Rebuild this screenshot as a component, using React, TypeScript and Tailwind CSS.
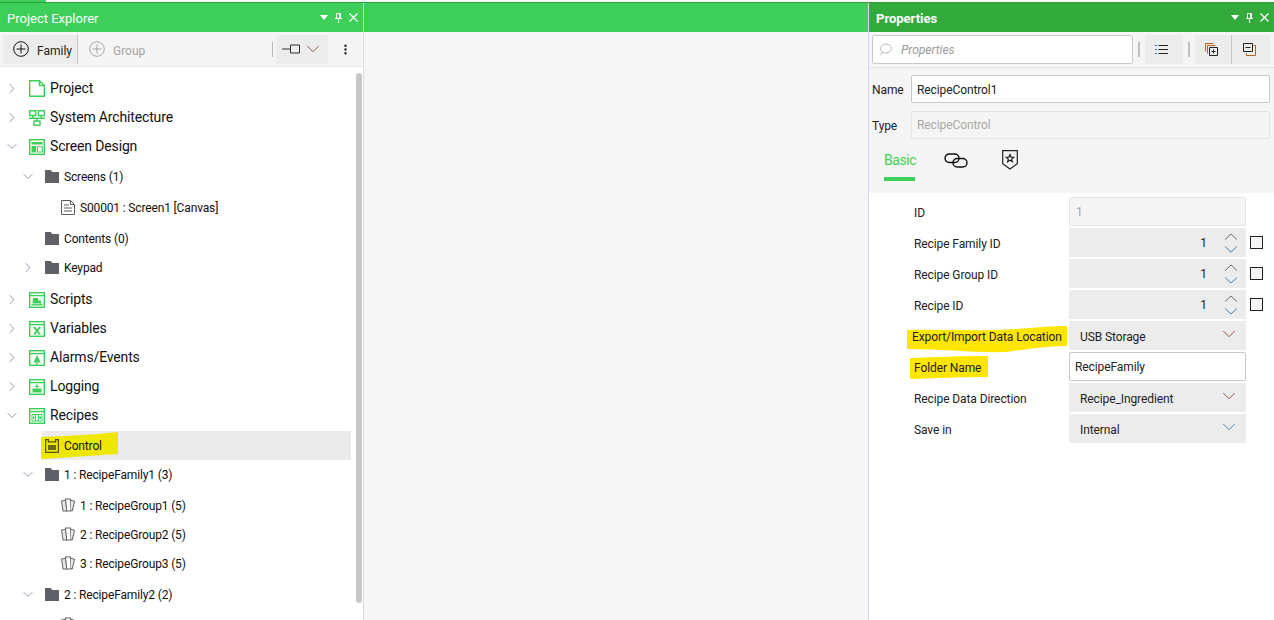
import { ChevronDown, ChevronRight, EllipsisVertical } from "lucide-react"
import type { ReactNode } from "react"

const font = "font-['Roboto','Noto_Sans',sans-serif]"

function Box({ children }: { children: ReactNode }) {
  return (
    <svg width="16" height="16" viewBox="0 0 16 16" fill="none" stroke="#3ecf5a" strokeWidth="1.4">
      <rect x="0.7" y="0.7" width="14.600" height="14.600" />
      {children}
    </svg>
  )
}

const icons: Record<string, ReactNode> = {
  project: (
    <svg width="16" height="17" viewBox="0 0 16 17" fill="none" stroke="#3ecf5a" strokeWidth="1.4">
      <path d="M.7.7h9.800l4.800 4.800v10.800H.7zM10.500.7v4.800h4.800" />
    </svg>
  ),
  system: (
    <svg width="16" height="16" viewBox="0 0 16 16" fill="none" stroke="#3ecf5a" strokeWidth="1.4">
      <path d="M.7.7h6v4.800h-6zM9.300.7h6v4.800h-6zM5 11h6v4.300H5zM3.700 5.500v2.700M12.300 5.500v2.700M8 8.200V11M0 8.200h16" />
    </svg>
  ),
  screen: (
    <Box>
      <path d="M2.500 3h11v2.500h-11z" fill="#3ecf5a" stroke="none" />
      <path d="M2.500 7h4.500v6.500H2.500z" fill="#3ecf5a" stroke="none" />
      <path d="M8.500 7.700h4.800v5.300H8.500z" strokeWidth="1.100" />
    </Box>
  ),
  scripts: (
    <Box>
      <path d="M.7 3.600h14.600" />
      <path d="M4 6h5v2.500h3v3H3.500z" fill="#3ecf5a" stroke="none" />
      <path d="M2.500 12.800h11" />
    </Box>
  ),
  variables: (
    <Box>
      <path d="M.7 3.600h14.600" />
      <path d="M5 6l6 7.500M11 6l-6 7.500" strokeWidth="2" />
    </Box>
  ),
  alarms: (
    <Box>
      <path d="M.7 3.600h14.600" />
      <path d="M8 5l3.500 7.500h-7zM7 13h2v1.500H7z" fill="#3ecf5a" stroke="none" />
    </Box>
  ),
  logging: (
    <Box>
      <path d="M.7 3.600h14.600" />
      <path d="M8 5v4M6 7.500h4" strokeWidth="1.100" />
      <path d="M3.500 9.500h9v4h-9z" fill="#3ecf5a" stroke="none" />
    </Box>
  ),
  recipes: (
    <Box>
      <path d="M.7 3.600h14.600" />
      <path d="M3 6.500h10v6.500H3zM6.500 6.500V13M9.500 6.500V13" strokeWidth="1" />
      <path d="M4 8.500h1.500v2.500H4zM10.500 8.500H12v2.500h-1.500z" fill="#3ecf5a" stroke="none" />
    </Box>
  ),
  folder: (
    <svg width="14" height="13" viewBox="0 0 14 13" fill="#5f5f66">
      <path d="M0 0h5.500l2 2H14v11H0z" />
    </svg>
  ),
  doc: (
    <svg width="14" height="15" viewBox="0 0 14 15" fill="none" stroke="#5c5c5c">
      <path d="M.5.500h9l4 4v10H.5zM9.500.500v4h4M3 5h5M3 8h8M3 11h8" />
    </svg>
  ),
  control: (
    <svg width="14" height="14" viewBox="0 0 14 14" fill="none" stroke="#55500f" strokeWidth="1.200">
      <path d="M.6.600h2.800v2.200h7.200V.600h2.800v12.800H.6z" />
      <path d="M3 6h8v5H3z" fill="#6b6a10" stroke="none" />
    </svg>
  ),
  group: (
    <svg width="15" height="15" viewBox="0 0 15 15" fill="none" stroke="#666" strokeWidth="1.100">
      <path d="M.6 2.800l4.600-.8 1 11.400H2.200z" fill="#e8e8e8" />
      <path d="M4.800.6h5.400l.6 12.800H6.200z" fill="#fff" />
      <path d="M10.600 2l3.900 1-2.400 10-1.300-.4" fill="#e8e8e8" />
    </svg>
  ),
}

type Row = { label: string; indent: 0 | 1 | 2; icon: string; open?: boolean; cls: string }

const rows: Row[] = [
  { label: "Project", indent: 0, icon: "project", open: false, cls: "" },
  { label: "System Architecture", indent: 0, icon: "system", open: false, cls: "" },
  { label: "Screen Design", indent: 0, icon: "screen", open: true, cls: "" },
  { label: "Screens (1)", indent: 1, icon: "folder", open: true, cls: "mt-[1px]" },
  { label: "S00001 : Screen1 [Canvas]", indent: 2, icon: "doc", cls: "mt-[2px]" },
  { label: "Contents (0)", indent: 1, icon: "folder", cls: "mt-[2px]" },
  { label: "Keypad", indent: 1, icon: "folder", open: false, cls: "" },
  { label: "Scripts", indent: 0, icon: "scripts", open: false, cls: "mt-[3px]" },
  { label: "Variables", indent: 0, icon: "variables", open: false, cls: "" },
  { label: "Alarms/Events", indent: 0, icon: "alarms", open: false, cls: "" },
  { label: "Logging", indent: 0, icon: "logging", open: false, cls: "" },
  { label: "Recipes", indent: 0, icon: "recipes", open: true, cls: "" },
  { label: "Control", indent: 1, icon: "control", cls: "mt-[1px]" },
  { label: "1 : RecipeFamily1 (3)", indent: 1, icon: "folder", open: true, cls: "" },
  { label: "1 : RecipeGroup1 (5)", indent: 2, icon: "group", cls: "mt-[2px]" },
  { label: "2 : RecipeGroup2 (5)", indent: 2, icon: "group", cls: "" },
  { label: "3 : RecipeGroup3 (5)", indent: 2, icon: "group", cls: "" },
  { label: "2 : RecipeFamily2 (2)", indent: 1, icon: "folder", open: true, cls: "mt-[2px]" },
  { label: "", indent: 2, icon: "group", cls: "mt-[1px]" },
]

function TreeRow({ row }: { row: Row }) {
  const chevronPad = row.indent === 0 ? "pl-[4px]" : "pl-[20px]"
  const selected = row.label === "Control"
  return (
    <div className={`relative flex h-[29px] shrink-0 items-center ${row.cls} ${chevronPad}`}>
      {selected && <div className="absolute inset-y-0 left-[42px] right-[12px] bg-[#ebebeb]" />}
      {selected && (
        <svg className="absolute left-[40px] top-0" width="80" height="30" viewBox="0 0 80 30">
          <path d="M1 6c25-1 50-2 77-5v22c-25 2-50 3-77 5z" fill="#eee800" />
        </svg>
      )}
      <span className="flex w-[16px] shrink-0 justify-center">
        {row.open === true && <ChevronDown size={21} strokeWidth={1.100} className="text-[#66788a]" />}
        {row.open === false && <ChevronRight size={21} strokeWidth={1.100} className="text-[#66788a]" />}
      </span>
      {row.indent === 2 && <span className="w-[16px] shrink-0" />}
      <span className={`relative flex shrink-0 justify-center ${row.indent === 0 ? "ml-[9px] w-[16px]" : "ml-[9px] w-[14px]"}`}>
        {icons[row.icon]}
      </span>
      <span className={`relative ml-[5px] whitespace-nowrap tracking-[-0.15px] text-[#111] ${row.indent === 0 ? "text-[14px]" : "pt-[1px] text-[12px]"}`}>
        {row.label}
      </span>
    </div>
  )
}

function PanelHeader({ title, dark }: { title: string; dark?: boolean }) {
  return (
    <div className={`flex h-[29px] shrink-0 items-center justify-between pl-[7px] pr-[5px] text-white ${dark ? "bg-[#33ab3c] font-bold" : "bg-[#3ecf5a]"}`}>
      <span className="pt-[2px] text-[13px]">{title}</span>
      <span className="flex items-center gap-[7px]">
        <span className="h-0 w-0 border-x-[4px] border-t-[5px] border-x-transparent border-t-white" />
        <svg width="7" height="10" viewBox="0 0 7 10" fill="none" stroke="#fff">
          <path d="M1.500.5h4v5h-4zM0 5.500h7M3.500 5.500V10M4.500 1v4" />
        </svg>
        <svg width="9" height="9" viewBox="0 0 9 9" fill="none" stroke="#fff" strokeWidth="1.200">
          <path d="M.5.500l8 8M8.500.500l-8 8" />
        </svg>
      </span>
    </div>
  )
}

function ProjectExplorer() {
  return (
    <aside className="relative flex w-[364px] shrink-0 flex-col overflow-hidden border-r border-[#dcdcdc] bg-white">
      <PanelHeader title="Project Explorer" />
      <div className="flex h-[35px] shrink-0 items-center border-b border-[#e9e9e9] bg-[#f5f5f5] pl-[3px] text-[12px]">
        <div className="flex h-[29px] w-[75px] items-center gap-[8px] border-r border-[#c6c6c6] bg-[#ececec] pl-[10px] text-[#222]">
          <svg width="16" height="16" viewBox="0 0 16 16" fill="none" stroke="#111" strokeWidth="1">
            <circle cx="8" cy="8" r="7.300" />
            <path d="M8 3.500v9M3.500 8h9" />
          </svg>
          <span className="pt-[3px]">Family</span>
        </div>
        <div className="flex h-[29px] w-[75px] items-center gap-[8px] pl-[11px] text-[#a6a6a6]">
          <svg width="16" height="16" viewBox="0 0 16 16" fill="none" stroke="#a6a6a6" strokeWidth="1">
            <circle cx="8" cy="8" r="7.300" />
            <path d="M8 3.500v9M3.500 8h9" />
          </svg>
          <span className="pt-[3px]">Group</span>
        </div>
        <div className="ml-[119px] h-[15px] w-px bg-[#b9b9b9]" />
        <div className="ml-[3px] flex h-[29px] w-[52px] items-center gap-[1px] bg-[#ececec] pl-[6px]">
          <svg width="19" height="10" viewBox="0 0 19 10" fill="none" stroke="#333">
            <path d="M0 5h8M8.500 1h9v8h-9z" />
          </svg>
          <ChevronDown size={22} strokeWidth={1} className="text-[#8a4a3a]" />
        </div>
        <EllipsisVertical size={13} strokeWidth={2.500} className="ml-[11px] text-[#222]" />
      </div>
      <div className="flex min-h-0 flex-1 flex-col pt-[7px]">
        {rows.map((row, i) => (
          <TreeRow key={i} row={row} />
        ))}
      </div>
      <div className="absolute left-[356px] top-[70px] h-[530px] w-[6px] rounded-[3px] bg-[#c8c8c8]" />
    </aside>
  )
}

function Spinner() {
  return (
    <svg width="14" height="20" viewBox="0 0 14 20" fill="none">
      <path d="M1 6.500l6-5.500 6 5.500" stroke="#6f6f6f" />
      <path d="M1 13.500l6 5.500 6-5.500" stroke="#4d7ea8" />
    </svg>
  )
}

function Field({ label, children, after, mark }: { label: string; children: ReactNode; after?: boolean; mark?: "export" | "folder" }) {
  return (
    <div className="flex h-[29px] items-center">
      <div className="relative flex h-[29px] w-[155px] shrink-0 items-center text-[12px] text-[#222]">
        {mark === "export" && (
          <svg className="absolute left-[-8px] top-0" width="164" height="34" viewBox="0 0 164 34">
            <path d="M1 9c30-1 60 1 90 0 25-1 50-4 70-4v20c-20 0-40 3-60 6-30 1-65-3-100-3z" fill="#ffe600" />
          </svg>
        )}
        {mark === "folder" && (
          <svg className="absolute left-[-4px] top-0" width="80" height="28" viewBox="0 0 80 28">
            <path d="M0 6c25-1 50-2 78-2v21c-25 0-50 1-78 2z" fill="#ffe600" />
          </svg>
        )}
        <span className={`relative whitespace-nowrap pt-[3px] ${mark === "export" ? "-ml-[2px]" : ""}`}>{label}</span>
      </div>
      {children}
      {after && <span className="ml-[4px] size-[13px] border border-[#222] bg-[#f5f5f5]" />}
    </div>
  )
}

function SpinField({ label }: { label: string }) {
  return (
    <Field label={label} after>
      <div className="flex h-[29px] w-[177px] items-center justify-end gap-[17px] bg-[#ececec] pr-[8px] text-[12px] text-[#222]">
        1
        <Spinner />
      </div>
    </Field>
  )
}

function SelectField({ label, value, mark, blue }: { label: string; value: string; mark?: "export"; blue?: boolean }) {
  return (
    <Field label={label} mark={mark}>
      <div className="flex h-[29px] w-[177px] items-center justify-between bg-[#ececec] pl-[11px] pr-[6px] text-[12px] text-[#222]">
        <span className="pt-[3px]">{value}</span>
        <ChevronDown size={22} strokeWidth={1} className={`-mt-[3px] ${blue ? "text-[#4d7ea8]" : "text-[#8a4a3a]"}`} />
      </div>
    </Field>
  )
}

function Properties() {
  return (
    <aside className="flex w-[406px] shrink-0 flex-col border-l border-[#d6d6ea] bg-white">
      <PanelHeader title="Properties" dark />
      <div className="flex h-[36px] shrink-0 items-center border-b border-[#e6e6e6] bg-[#f5f5f5] pl-[3px] text-[12px]">
        <div className="flex h-[29px] w-[261px] items-center gap-[9px] rounded-[2px] border border-[#c8c8c8] bg-white pl-[6px] italic text-[#9a9a9a]">
          <svg width="13" height="13" viewBox="0 0 13 13" fill="none" stroke="#b5b5b5">
            <ellipse cx="7" cy="5.500" rx="5.500" ry="4.500" />
            <path d="M3.500 9L1.500 12" />
          </svg>
          Properties
        </div>
        <div className="ml-[5px] h-[15px] w-[2px] bg-[#bcc0c4]" />
        <div className="ml-[5px] flex h-[29px] w-[38px] items-center justify-center bg-[#ececec] pr-[6px]">
          <svg width="13" height="11" viewBox="0 0 13 11" fill="none" stroke="#222">
            <path d="M3.500 1.500H13M3.500 5.500H13M3.500 9.500H13" />
            <path d="M0 1.500h2M0 5.500h2M0 9.500h2" stroke="#2c6fb0" />
          </svg>
        </div>
        <div className="ml-[5px] h-[15px] w-[2px] bg-[#bcc0c4]" />
        <div className="ml-[5px] flex h-[29px] w-[37px] items-center justify-center border-r border-[#c6c6c6] bg-[#ececec] pr-[4px]">
          <svg width="13" height="13" viewBox="0 0 13 13" fill="none" stroke="#222">
            <path d="M.5 8.500v-8h8" stroke="#b5651d" />
            <path d="M2.500 10.500v-8h8" stroke="#b5651d" />
            <path d="M4.500 4.500h8v8h-8zM8.500 6.500v4M6.500 8.500h4" fill="#ececec" />
          </svg>
        </div>
        <div className="flex h-[29px] w-[38px] items-center justify-center bg-[#ececec] pr-[4px]">
          <svg width="13" height="13" viewBox="0 0 13 13" fill="none" stroke="#222">
            <path d="M10.500 2.500h2v10h-9v-2" stroke="#b5651d" />
            <path d="M.5.500h9v8h-9zM2.500 4.500h5" />
          </svg>
        </div>
      </div>
      <div className="flex h-[125px] shrink-0 flex-col bg-[#f5f5f5] pl-[3px] text-[12px] tracking-[-0.1px] text-[#222]">
        <div className="mt-[7px] flex h-[28px] items-center">
          <span className="w-[39px] pt-[1px]">Name</span>
          <div className="flex h-[28px] w-[359px] items-center rounded-[2px] border border-[#c8c8c8] bg-white pl-[5px] pt-[1px] text-[#222]">RecipeControl1</div>
        </div>
        <div className="mt-[8px] flex h-[28px] items-center">
          <span className="w-[39px] pt-[1px]">Type</span>
          <div className="flex h-[28px] w-[359px] items-center rounded-[2px] border border-[#e4e4e4] pl-[5px] text-[#a8a8a8]">RecipeControl</div>
        </div>
        <div className="flex flex-1 items-start pl-[12px] pt-[11px]">
          <div className="flex w-[31px] flex-col">
            <span className="text-[14px] leading-[20px] tracking-[-0.4px] text-[#3ecf5a]">Basic</span>
            <span className="mt-[7px] h-[4px] bg-[#3ecf5a]" />
          </div>
          <svg className="ml-[29px] mt-[3px]" width="24" height="15" viewBox="0 0 24 15" fill="none" stroke="#111" strokeWidth="1.400">
            <rect x="1" y="1" width="14" height="8.500" rx="4.250" />
            <rect x="9" y="5.500" width="14" height="8.500" rx="4.250" />
          </svg>
          <svg className="ml-[34px] mt-0" width="16" height="20" viewBox="0 0 16 20" fill="none" stroke="#222" strokeWidth="1.200">
            <path d="M.7.700h14.600v13L8 19 .7 13.700z" />
            <path d="M8 4.500l1.100 2.600 2.700.2-2.100 1.800.7 2.700L8 10.300l-2.400 1.500.7-2.700-2.100-1.800 2.700-.2z" />
          </svg>
        </div>
      </div>
      <div className="flex flex-1 flex-col gap-[2px] pl-[45px] pt-[4px] tracking-[-0.1px]">
        <Field label="ID">
          <div className="flex h-[29px] w-[177px] items-center rounded-[2px] border border-[#e4e4e4] bg-[#f5f5f5] pl-[6px] text-[12px] text-[#a8a8a8]">1</div>
        </Field>
        <SpinField label="Recipe Family ID" />
        <SpinField label="Recipe Group ID" />
        <SpinField label="Recipe ID" />
        <SelectField label="Export/Import Data Location" value="USB Storage" mark="export" />
        <Field label="Folder Name" mark="folder">
          <div className="flex h-[29px] w-[177px] items-center rounded-[2px] border border-[#c8c8c8] bg-white pl-[5px] text-[12px] text-[#222]">RecipeFamily</div>
        </Field>
        <SelectField label="Recipe Data Direction" value="Recipe_Ingredient" />
        <SelectField label="Save in" value="Internal" blue />
      </div>
    </aside>
  )
}

export default function App() {
  return (
    <div className={`flex h-[620px] w-[1274px] flex-col overflow-hidden bg-white ${font}`}>
      <div className="flex h-[2px] shrink-0">
        <div className="w-[46px] bg-[#3ecf5a]" />
        <div className="flex-1 bg-white" />
      </div>
      <div className="h-px shrink-0 bg-[#2f9e41]" />
      <div className="flex min-h-0 flex-1">
        <ProjectExplorer />
        <main className="flex w-[504px] shrink-0 flex-col bg-[#f6f6f6]">
          <div className="h-[29px] shrink-0 bg-[#3ecf5a]" />
        </main>
        <Properties />
      </div>
    </div>
  )
}
